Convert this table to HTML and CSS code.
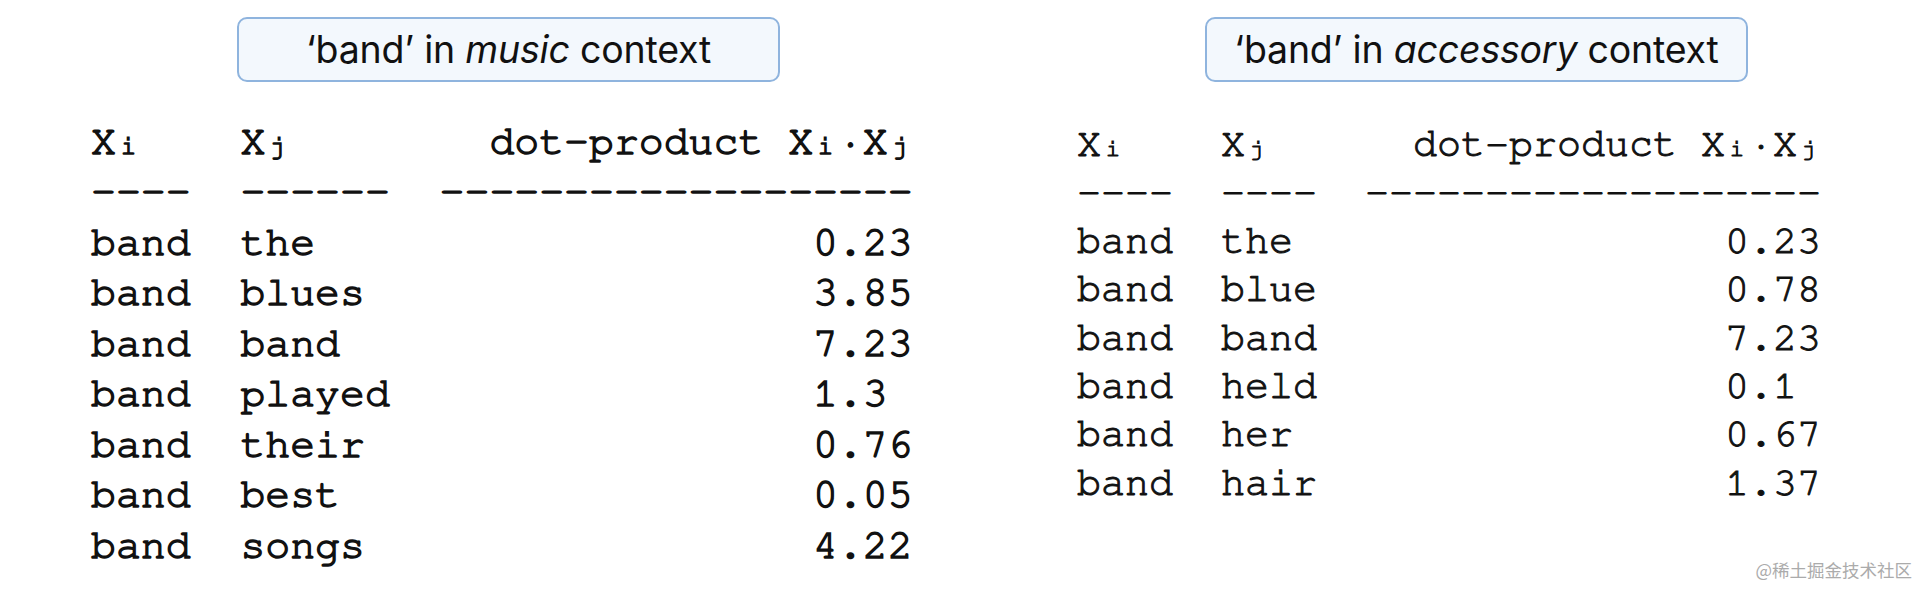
FILE: index.html
```html
<!DOCTYPE html>
<html lang="en">
<head>
<meta charset="utf-8">
<title>band context dot-products</title>
<link rel="stylesheet" href="styles.css">
</head>
<body>
<main class="page">
  <section class="panel panel-music">
    <div class="label"><span>‘band’ in <em>music</em> context</span></div>
    <div class="table">
      <div class="row"><span class="c1">X<span class="sub"><span>i</span></span></span><span class="c2">X<span class="sub"><span>j</span></span></span><span class="c3">dot-product X<span class="sub"><span>i</span></span>·X<span class="sub"><span>j</span></span></span></div>
      <div class="row"><span class="c1">----</span><span class="c2">------</span><span class="c3">-------------------</span></div>
      <div class="row"><span class="c1">band</span><span class="c2">the</span><span class="c3">0.23</span></div>
      <div class="row"><span class="c1">band</span><span class="c2">blues</span><span class="c3">3.85</span></div>
      <div class="row"><span class="c1">band</span><span class="c2">band</span><span class="c3">7.23</span></div>
      <div class="row"><span class="c1">band</span><span class="c2">played</span><span class="c3">1.3 </span></div>
      <div class="row"><span class="c1">band</span><span class="c2">their</span><span class="c3">0.76</span></div>
      <div class="row"><span class="c1">band</span><span class="c2">best</span><span class="c3">0.05</span></div>
      <div class="row"><span class="c1">band</span><span class="c2">songs</span><span class="c3">4.22</span></div>
    </div>
  </section>
  <section class="panel panel-accessory">
    <div class="label"><span>‘band’ in <em>accessory</em> context</span></div>
    <div class="table">
      <div class="row"><span class="c1">X<span class="sub"><span>i</span></span></span><span class="c2">X<span class="sub"><span>j</span></span></span><span class="c3">dot-product X<span class="sub"><span>i</span></span>·X<span class="sub"><span>j</span></span></span></div>
      <div class="row"><span class="c1">----</span><span class="c2">----</span><span class="c3">-------------------</span></div>
      <div class="row"><span class="c1">band</span><span class="c2">the</span><span class="c3">0.23</span></div>
      <div class="row"><span class="c1">band</span><span class="c2">blue</span><span class="c3">0.78</span></div>
      <div class="row"><span class="c1">band</span><span class="c2">band</span><span class="c3">7.23</span></div>
      <div class="row"><span class="c1">band</span><span class="c2">held</span><span class="c3">0.1 </span></div>
      <div class="row"><span class="c1">band</span><span class="c2">her</span><span class="c3">0.67</span></div>
      <div class="row"><span class="c1">band</span><span class="c2">hair</span><span class="c3">1.37</span></div>
    </div>
  </section>
  <div class="watermark">@稀土掘金技术社区</div>
</main>
</body>
</html>
```

FILE: styles.css
```css
html, body {
  margin: 0;
  padding: 0;
  background: #ffffff;
}

.page {
  position: relative;
  display: flex;
  width: 1920px;
  height: 590px;
  overflow: hidden;
}

.panel {
  width: 960px;
  display: flex;
  flex-direction: column;
  align-items: flex-start;
}

.label {
  box-sizing: border-box;
  width: 543px;
  height: 65px;
  margin-top: 17px;
  border: 2px solid #8fb4de;
  border-radius: 10px;
  background: #f3f8fd;
  display: flex;
  align-items: center;
  justify-content: center;
  font-family: Inter, "Noto Sans", sans-serif;
  font-size: 37.5px;
  color: #111111;
  letter-spacing: -0.2px;
  white-space: pre;
}

.label em {
  font-style: italic;
}

.panel-music .label { margin-left: 237px; }
.panel-accessory .label { margin-left: 245px; }

.table {
  font-family: "Nimbus Mono PS", "Nimbus Mono L", FreeMono, "Liberation Mono", "Courier New", monospace;
  color: #111111;
}

.panel-music .table {
  margin-left: 91px;
  margin-top: 34.5px;
  font-size: 41.5px;
  line-height: 50.5px;
  -webkit-text-stroke: 1.5px #111111;
}

.panel-accessory .table {
  margin-left: 117px;
  margin-top: 38px;
  font-size: 40px;
  line-height: 48.4px;
  -webkit-text-stroke: 1px #111111;
}

.row {
  display: grid;
  white-space: pre;
}

.panel-music .row { grid-template-columns: 6ch 8ch 19ch; }
.panel-accessory .row { grid-template-columns: 6ch 6ch 19ch; }

.c3 { text-align: right; }

.sub {
  display: inline-block;
  width: 1ch;
  text-align: center;
  line-height: 1;
}

.sub span {
  font-size: 60%;
  line-height: 1;
}

.watermark {
  position: absolute;
  right: 8px;
  bottom: 8px;
  font-family: "Noto Sans CJK SC", "Noto Sans", sans-serif;
  font-size: 17.5px;
  color: #ababab;
}
```
